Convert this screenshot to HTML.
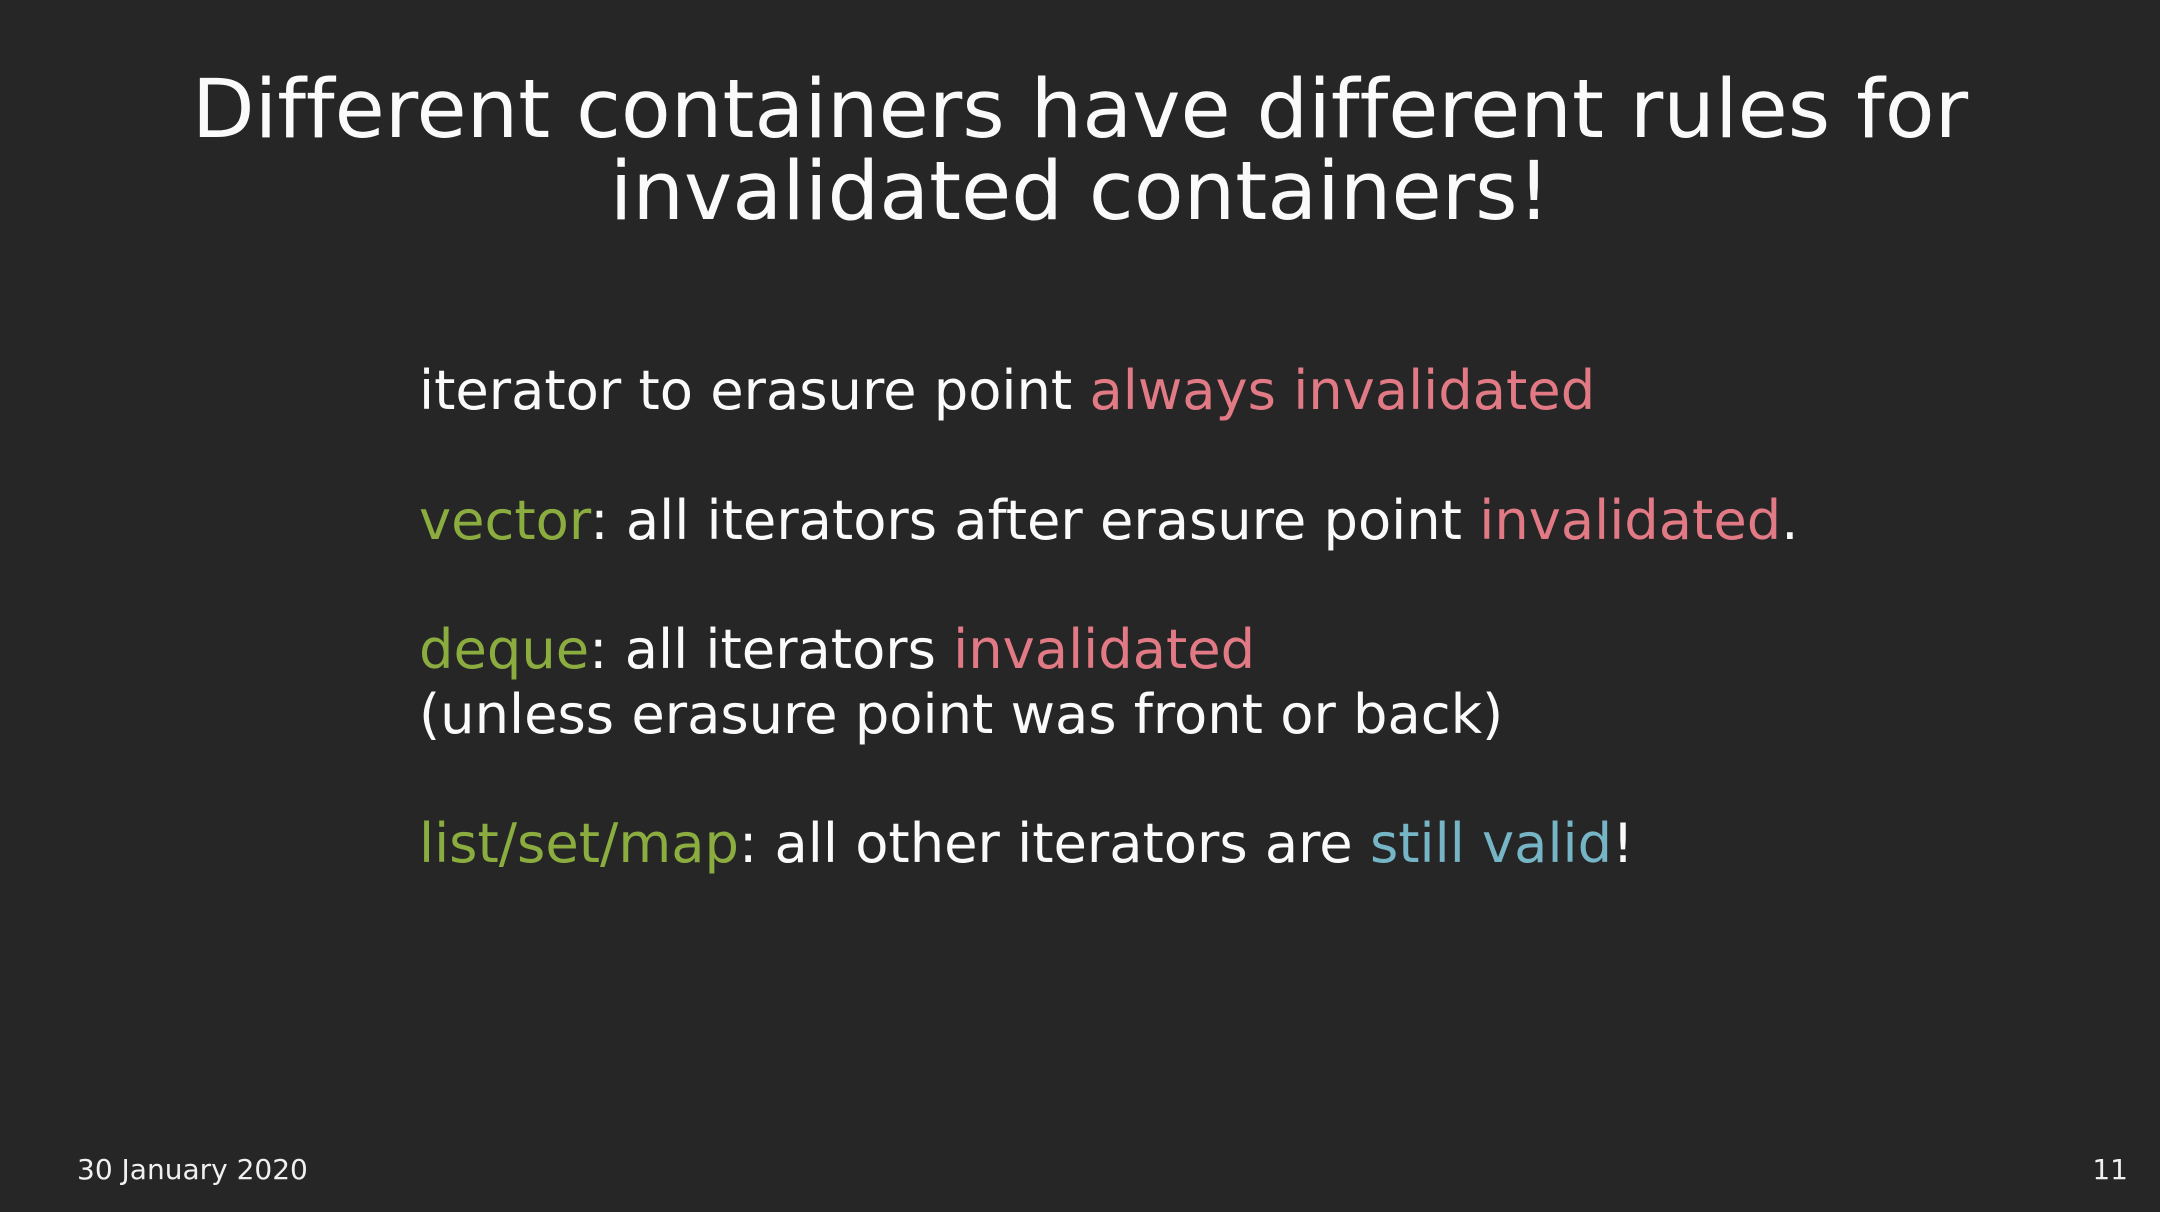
<!DOCTYPE html>
<html><head><meta charset="utf-8"><style>
html,body{margin:0;padding:0}
body{width:2160px;height:1212px;background:#262626;position:relative;overflow:hidden;font-family:"DejaVu Sans","Liberation Sans",sans-serif;color:#fafafa;font-variant-ligatures:none}
.t{position:absolute;left:0;width:2160px;text-align:center;font-size:81.5px;line-height:82px;white-space:nowrap}
.b{position:absolute;left:419px;font-size:54.3px;line-height:55px;white-space:nowrap}
.r{color:#e27a85}.g{color:#8bad3f}.c{color:#76b5c5}
.f{position:absolute;font-size:28px;line-height:28px;color:#f0f0f0;white-space:nowrap}
</style></head><body>
<div class="t" style="top:69px">Different containers have different rules for</div>
<div class="t" style="top:151px">invalidated containers!</div>
<div class="b" style="top:363px">iterator to erasure point <span class="r">always invalidated</span></div>
<div class="b" style="top:493px"><span class="g">vector</span>: all iterators after erasure point <span class="r">invalidated</span>.</div>
<div class="b" style="top:622px"><span class="g">deque</span>: all iterators <span class="r">invalidated</span></div>
<div class="b" style="top:687px">(unless erasure point was front or back)</div>
<div class="b" style="top:816px"><span class="g">list/set/map</span>: all other iterators are <span class="c">still valid</span>!</div>
<div class="f" style="left:77px;top:1156px">30 January 2020</div>
<div class="f" style="right:32px;top:1156px">11</div>
</body></html>
